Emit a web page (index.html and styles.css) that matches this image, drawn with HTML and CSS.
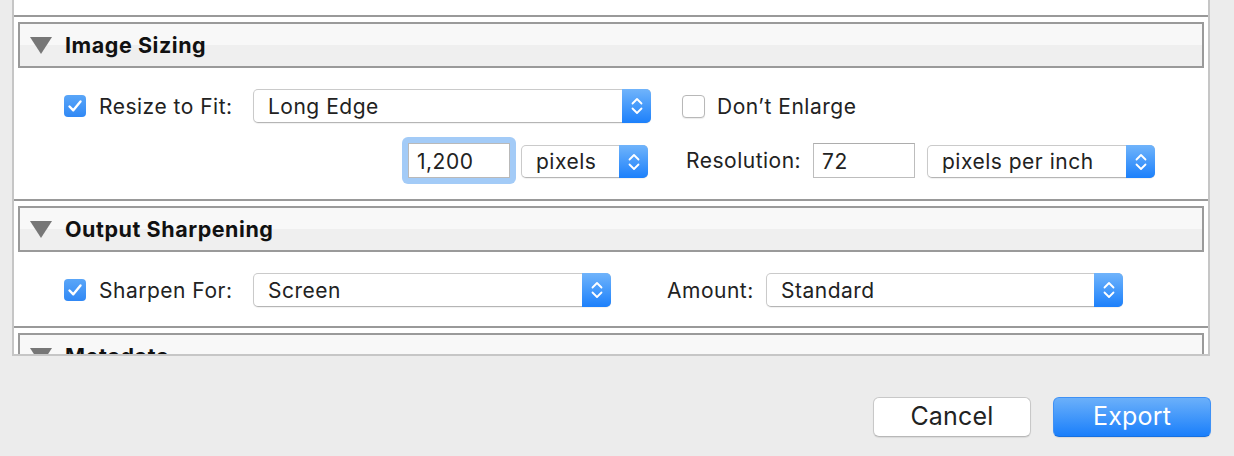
FILE: index.html
```html
<!DOCTYPE html>
<html>
<head>
<meta charset="utf-8">
<title>Export</title>
<link rel="stylesheet" href="styles.css">
</head>
<body>
<div class="panel">
  <div class="prev"></div>

  <section class="sec">
    <div class="sep"></div>
    <div class="head">
      <svg class="tri" width="22" height="17" viewBox="0 0 22 17"><polygon points="0,0 22,0 11,17"/></svg>
      <span class="head-title">Image Sizing</span>
    </div>
    <div class="body body-sizing">
      <div class="row row1">
        <div class="check w-check">
          <span class="cb on"><svg width="22" height="22" viewBox="0 0 22 22"><path d="M5.5 11.5 L9.3 15.3 L16.5 6.5"/></svg></span>
          <span class="lbl">Resize to Fit:</span>
        </div>
        <div class="select w-long"><span class="val">Long Edge</span><span class="step"><svg width="12" height="20" viewBox="0 0 12 20"><path d="M1.5 7.5 L6 3 L10.5 7.5 M1.5 12.5 L6 17 L10.5 12.5"/></svg></span></div>
        <div class="check enl">
          <span class="cb off"></span>
          <span class="lbl">Don’t Enlarge</span>
        </div>
      </div>
      <div class="row row2">
        <span class="ring"><span class="field w-num">1,200</span></span>
        <div class="select w-pix sel-low"><span class="val">pixels</span><span class="step"><svg width="12" height="20" viewBox="0 0 12 20"><path d="M1.5 7.5 L6 3 L10.5 7.5 M1.5 12.5 L6 17 L10.5 12.5"/></svg></span></div>
        <span class="lbl res">Resolution:</span>
        <span class="field w-num">72</span>
        <div class="select w-ppi sel-low"><span class="val">pixels per inch</span><span class="step"><svg width="12" height="20" viewBox="0 0 12 20"><path d="M1.5 7.5 L6 3 L10.5 7.5 M1.5 12.5 L6 17 L10.5 12.5"/></svg></span></div>
      </div>
    </div>
  </section>

  <section class="sec">
    <div class="sep"></div>
    <div class="head">
      <svg class="tri" width="22" height="17" viewBox="0 0 22 17"><polygon points="0,0 22,0 11,17"/></svg>
      <span class="head-title">Output Sharpening</span>
    </div>
    <div class="body body-sharp">
      <div class="row row3">
        <div class="check w-check">
          <span class="cb on"><svg width="22" height="22" viewBox="0 0 22 22"><path d="M5.5 11.5 L9.3 15.3 L16.5 6.5"/></svg></span>
          <span class="lbl">Sharpen For:</span>
        </div>
        <div class="select w-screen"><span class="val">Screen</span><span class="step"><svg width="12" height="20" viewBox="0 0 12 20"><path d="M1.5 7.5 L6 3 L10.5 7.5 M1.5 12.5 L6 17 L10.5 12.5"/></svg></span></div>
        <span class="lbl amt">Amount:</span>
        <div class="select w-amount"><span class="val">Standard</span><span class="step"><svg width="12" height="20" viewBox="0 0 12 20"><path d="M1.5 7.5 L6 3 L10.5 7.5 M1.5 12.5 L6 17 L10.5 12.5"/></svg></span></div>
      </div>
    </div>
  </section>

  <section class="sec">
    <div class="sep"></div>
    <div class="head">
      <svg class="tri" width="22" height="17" viewBox="0 0 22 17"><polygon points="0,0 22,0 11,17"/></svg>
      <span class="head-title">Metadata</span>
    </div>
  </section>
</div>

<div class="footer">
  <button class="btn">Cancel</button>
  <button class="btn primary">Export</button>
</div>
</body>
</html>
```

FILE: styles.css
```css
* { box-sizing: border-box; }

html, body {
  margin: 0;
  padding: 0;
  background: #ececec;
  font-family: "Inter", "Liberation Sans", sans-serif;
  color: #222;
  width: 1234px;
  height: 456px;
  overflow: hidden;
}

.panel {
  margin-left: 12px;
  width: 1198px;
  height: 356px;
  background: #ffffff;
  border-left: 2px solid #c6c6c6;
  border-right: 2px solid #c6c6c6;
  border-bottom: 2px solid #c6c6c6;
  overflow: hidden;
}

.prev { height: 15px; }

.sep {
  height: 2px;
  background: #999999;
}

.head {
  margin: 5px 4px 0 4px;
  height: 46px;
  border: 2px solid #9a9a9a;
  background: linear-gradient(#f8f8f8 0, #f8f8f8 50%, #efefef 50%, #efefef 100%);
  display: flex;
  align-items: center;
  padding-left: 10px;
}

.tri { fill: #777777; margin-top: 1px; }

.head-title {
  margin-left: 13px;
  font-weight: 700;
  font-size: 21.5px;
  color: #111;
  letter-spacing: 0.55px;
  white-space: nowrap;
}

.body-sizing { height: 131px; padding-top: 21px; }
.body-sharp { height: 74px; padding-top: 21px; }

.row {
  display: flex;
  align-items: center;
}

.row1 { height: 34px; padding-left: 50px; }
.row2 { height: 35px; margin-top: 20px; padding-left: 395px; }
.row3 { height: 34px; padding-left: 50px; }

.lbl {
  font-size: 21px;
  letter-spacing: 0.5px;
  color: #222;
  white-space: nowrap;
}

.check {
  display: flex;
  align-items: center;
}

.w-check { width: 189px; }

.cb {
  width: 22px;
  height: 22px;
  border-radius: 4px;
  flex: none;
  display: flex;
  align-items: center;
  justify-content: center;
  margin-right: 13px;
}

.cb.on {
  background: linear-gradient(#5aa6f8, #3088f5);
}

.cb.on svg path {
  fill: none;
  stroke: #ffffff;
  stroke-width: 2.4;
  stroke-linecap: round;
  stroke-linejoin: round;
}

.cb.off {
  width: 23px;
  height: 23px;
  background: #ffffff;
  border: 1px solid #b8b8b8;
  box-shadow: 0 1px 1px rgba(0,0,0,0.08);
  margin-right: 12px;
}

.enl { margin-left: 31px; }

.select {
  height: 34px;
  display: flex;
  align-items: center;
  background: #ffffff;
  border: 1px solid #cacaca;
  border-bottom-color: #b5b5b5;
  border-radius: 5px;
  box-shadow: 0 1px 1px rgba(0,0,0,0.06);
  flex: none;
}

.select .val {
  flex: 1;
  padding-left: 14px;
  font-size: 21px;
  letter-spacing: 0.5px;
  color: #222;
  white-space: nowrap;
}

.select .step {
  align-self: stretch;
  margin: -1px -1px -1px 0;
  width: 29px;
  border-radius: 0 5px 5px 0;
  background: linear-gradient(#70b4fb, #1c80fb);
  display: flex;
  align-items: center;
  justify-content: center;
}

.select .step svg path {
  fill: none;
  stroke: #ffffff;
  stroke-width: 1.8;
  stroke-linecap: round;
  stroke-linejoin: round;
}

.w-long { width: 398px; }
.w-pix { width: 127px; margin-left: 12px; }
.w-ppi { width: 228px; margin-left: 12px; }
.w-screen { width: 358px; }
.w-amount { width: 357px; }

.sel-low { height: 33px; margin-top: 2px; }

.ring {
  display: flex;
  margin: -7px;
  padding: 6px;
  border-radius: 6px;
  background: #a3cbf7;
}

.field {
  height: 35px;
  background: #ffffff;
  border: 1px solid #bdbdbd;
  border-top-color: #adadad;
  display: flex;
  align-items: center;
  padding-left: 8px;
  padding-top: 1px;
  font-size: 21px;
  letter-spacing: 0.5px;
  color: #222;
  flex: none;
}

.ring .field { border-color: #b9b9b9; }

.w-num { width: 102px; }

.res { margin-left: 38px; width: 127px; }
.amt { margin-left: 56px; width: 99px; }

.footer {
  display: flex;
  justify-content: flex-end;
  gap: 22px;
  padding-top: 41px;
  padding-right: 23px;
}

.btn {
  width: 158px;
  height: 40px;
  border-radius: 6px;
  font-family: "Inter", "Liberation Sans", sans-serif;
  font-size: 25px;
  letter-spacing: 0.2px;
  color: #222;
  background: #ffffff;
  border: 1px solid #c8c8c8;
  border-bottom-color: #b8b8b8;
  box-shadow: 0 1px 1px rgba(0,0,0,0.08);
  padding: 0;
  padding-bottom: 2px;
}

.btn.primary {
  color: #ffffff;
  background: linear-gradient(#6bb0fa, #1a7ffb);
  border: 1px solid #3f91f5;
  border-bottom-color: #1670e0;
}
```
